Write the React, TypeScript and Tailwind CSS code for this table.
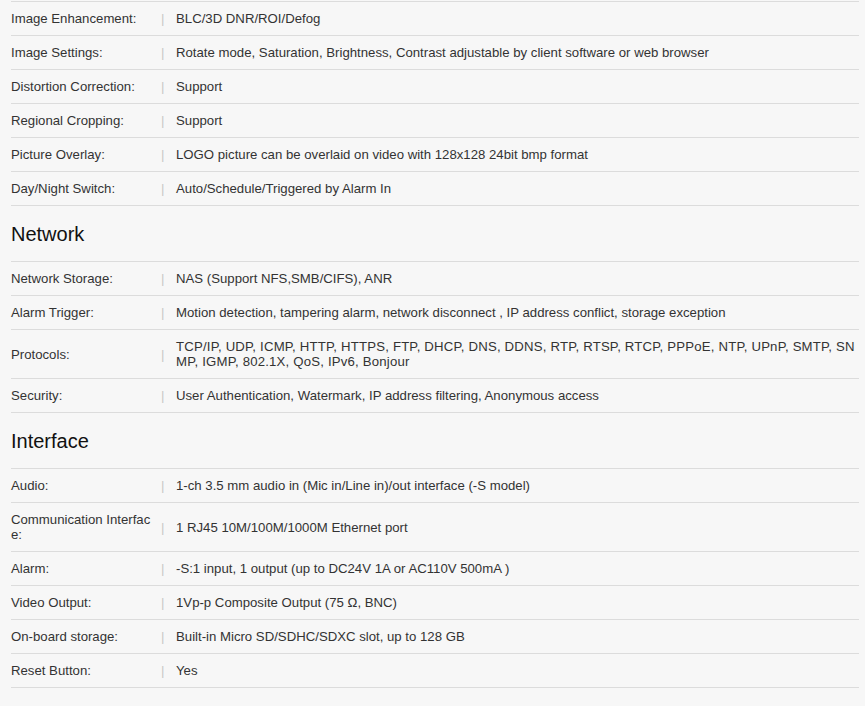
type Row = { label: string; value: string; wide?: boolean }

const imageRows: Row[] = [
  { label: 'Image Enhancement:', value: 'BLC/3D DNR/ROI/Defog' },
  { label: 'Image Settings:', value: 'Rotate mode, Saturation, Brightness, Contrast adjustable by client software or web browser' },
  { label: 'Distortion Correction:', value: 'Support' },
  { label: 'Regional Cropping:', value: 'Support' },
  { label: 'Picture Overlay:', value: 'LOGO picture can be overlaid on video with 128x128 24bit bmp format' },
  { label: 'Day/Night Switch:', value: 'Auto/Schedule/Triggered by Alarm In' },
]

const networkRows: Row[] = [
  { label: 'Network Storage:', value: 'NAS (Support NFS,SMB/CIFS), ANR' },
  { label: 'Alarm Trigger:', value: 'Motion detection, tampering alarm, network disconnect , IP address conflict, storage exception' },
  {
    label: 'Protocols:',
    value: 'TCP/IP, UDP, ICMP, HTTP, HTTPS, FTP, DHCP, DNS, DDNS, RTP, RTSP, RTCP, PPPoE, NTP, UPnP, SMTP, SNMP, IGMP, 802.1X, QoS, IPv6, Bonjour',
    wide: true,
  },
  { label: 'Security:', value: 'User Authentication, Watermark, IP address filtering, Anonymous access' },
]

const interfaceRows: Row[] = [
  { label: 'Audio:', value: '1-ch 3.5 mm audio in (Mic in/Line in)/out interface (-S model)' },
  { label: 'Communication Interface:', value: '1 RJ45 10M/100M/1000M Ethernet port' },
  { label: 'Alarm:', value: '-S:1 input, 1 output (up to DC24V 1A or AC110V 500mA )' },
  { label: 'Video Output:', value: '1Vp-p Composite Output (75 Ω, BNC)' },
  { label: 'On-board storage:', value: 'Built-in Micro SD/SDHC/SDXC slot, up to 128 GB' },
  { label: 'Reset Button:', value: 'Yes' },
]

const SpecRow = ({ label, value, wide }: Row) => {
  return (
    <div className="flex items-center border-b border-[#dcdcdc] py-[9px] text-[13.2px] leading-[15px] text-[#333]">
      <div className="w-[142px] shrink-0 break-all">{label}</div>
      <div className="w-[23px] shrink-0 pl-[8px] text-[#c8c8c8]">|</div>
      {/* caps-heavy line renders wider in the original, widen it a touch */}
      <div className={wide ? 'min-w-0 flex-1 break-all tracking-[0.19px]' : 'min-w-0 flex-1 break-all'}>{value}</div>
    </div>
  )
}

const Heading = ({ title }: { title: string }) => {
  return (
    <div className="border-b border-[#dcdcdc] pt-[16px] pb-[15px] text-[20px] leading-[24px] text-[#111]">{title}</div>
  )
}

export default function App() {
  return (
    <div className="min-h-[706px] bg-[#f7f7f7] pt-[1px] pr-[6px] pl-[11px] font-['Liberation_Sans',Arial,sans-serif]">
      <div className="border-t border-[#dcdcdc]">
        {imageRows.map((r) => (
          <SpecRow key={r.label} {...r} />
        ))}
        <Heading title="Network" />
        {networkRows.map((r) => (
          <SpecRow key={r.label} {...r} />
        ))}
        <Heading title="Interface" />
        {interfaceRows.map((r) => (
          <SpecRow key={r.label} {...r} />
        ))}
      </div>
    </div>
  )
}
